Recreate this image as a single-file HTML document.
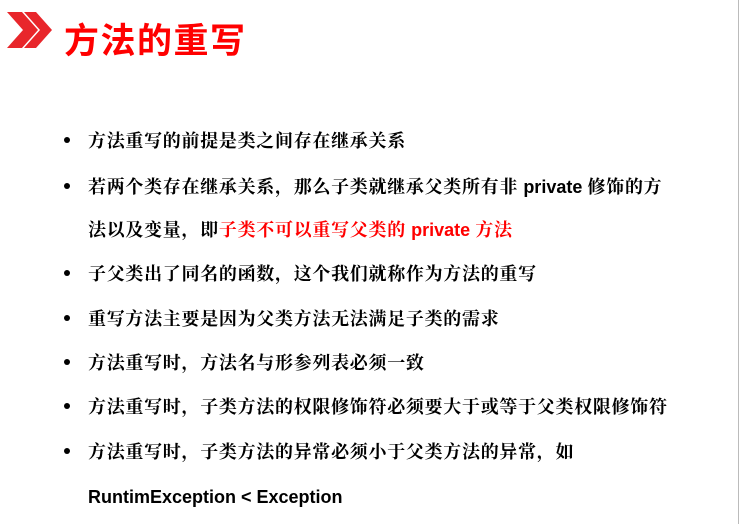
<!DOCTYPE html>
<html><head><meta charset="utf-8"><style>
body{margin:0;width:741px;height:524px;background:#fff;position:relative;overflow:hidden}
.t{position:absolute;left:64px;top:13px;font:bold 35px "Liberation Sans","Noto Sans CJK SC",sans-serif;color:#f00;letter-spacing:1.5px}
.l{position:absolute;left:88px;font:bold 18px "Noto Serif CJK SC",serif;color:#000;white-space:nowrap;line-height:24px;letter-spacing:0.7px}
.l b{font-family:"Liberation Sans",sans-serif;font-weight:bold;letter-spacing:0}
.d{position:absolute;left:64px;width:6px;height:6px;border-radius:50%;background:#000}
.r{color:#f00}
.edge{position:absolute;left:738px;top:0;width:1px;height:524px;background:#bbb}
</style></head><body>
<svg style="position:absolute;left:0;top:0" width="60" height="60">
<polygon points="7,12 22,12 38,30 22,48 7,48 23,30" fill="#e8262b"/>
<polygon points="24,12 36,12 52,30 36,48 24,48 40,30" fill="#e8262b"/>
</svg>
<div class="t">方法的重写</div>
<div class="d" style="top:137px"></div><div class="l" style="top:128px">方法重写的前提是类之间存在继承关系</div>
<div class="d" style="top:183px"></div><div class="l" style="top:174px">若两个类存在继承关系，那么子类就继承父类所有非 <b>private</b> 修饰的方</div>
<div class="l" style="top:217px">法以及变量，即<span class="r">子类不可以重写父类的 <b>private</b> 方法</span></div>
<div class="d" style="top:270px"></div><div class="l" style="top:261px">子父类出了同名的函数，这个我们就称作为方法的重写</div>
<div class="d" style="top:315px"></div><div class="l" style="top:306px">重写方法主要是因为父类方法无法满足子类的需求</div>
<div class="d" style="top:359px"></div><div class="l" style="top:350px">方法重写时，方法名与形参列表必须一致</div>
<div class="d" style="top:403px"></div><div class="l" style="top:394px">方法重写时，子类方法的权限修饰符必须要大于或等于父类权限修饰符</div>
<div class="d" style="top:448px"></div><div class="l" style="top:439px">方法重写时，子类方法的异常必须小于父类方法的异常，如</div>
<div class="l" style="top:484px"><b>RuntimException &lt; Exception</b></div>
<div class="edge"></div>
</body></html>
